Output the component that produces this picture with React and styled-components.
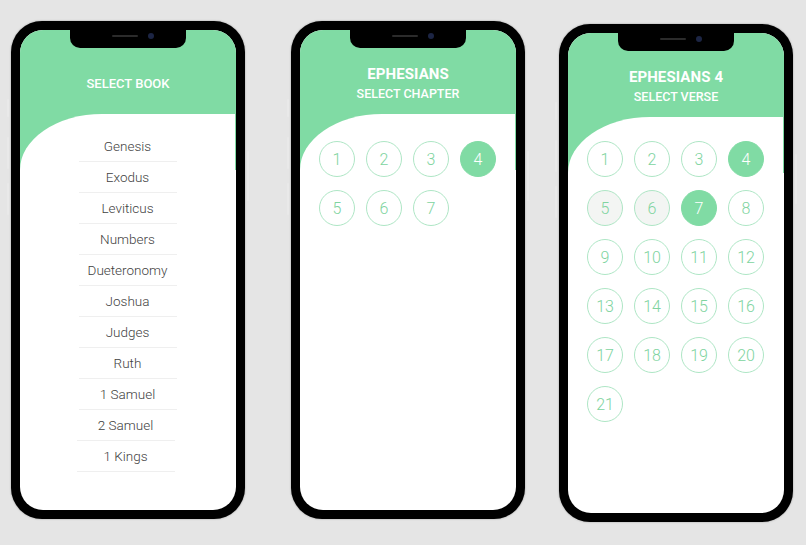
import React from "react";
import styled, { createGlobalStyle } from "styled-components";

const GREEN = "#80dba4";

const GlobalStyle = createGlobalStyle`
  html, body {
    margin: 0;
    padding: 0;
    background: #e5e5e5;
    font-family: Roboto, "Liberation Sans", sans-serif;
  }
`;

const Stage = styled.div`
  display: flex;
  align-items: flex-start;
  padding: 21px 0 0 11px;
  height: 545px;
  box-sizing: border-box;
`;

const PhoneFrame = styled.div`
  position: relative;
  flex: none;
  width: 234px;
  height: 498px;
  margin-left: ${(p) => p.$ml || 0}px;
  margin-top: ${(p) => p.$mt || 0}px;
  padding: 9px;
  box-sizing: border-box;
  background: #000;
  border-radius: 31px;
  box-shadow: 0 0 2px rgba(0, 0, 0, 0.35);
`;

const SideButton = styled.span`
  position: absolute;
  width: 2px;
  left: ${(p) => (p.$right ? "auto" : "-4px")};
  right: ${(p) => (p.$right ? "-4px" : "auto")};
  top: ${(p) => p.$top}px;
  height: ${(p) => p.$h}px;
  background: #e9e9e9;
  border-radius: 1px;
`;

const Screen = styled.div`
  position: relative;
  width: 100%;
  height: 100%;
  background: #fff;
  border-radius: 23px;
  overflow: hidden;
`;

const Notch = styled.div`
  position: absolute;
  top: 0;
  left: 50%;
  transform: translateX(-50%);
  width: 116px;
  height: 18px;
  background: #000;
  border-radius: 0 0 10px 10px;
  display: flex;
  align-items: center;
  justify-content: center;
  gap: 10px;
  padding-left: 10px;
  box-sizing: border-box;
  z-index: 2;
`;

const Speaker = styled.span`
  width: 26px;
  height: 2px;
  border-radius: 1px;
  background: #2b2b2b;
  margin-top: -6px;
`;

const Camera = styled.span`
  width: 6px;
  height: 6px;
  border-radius: 50%;
  background: #1c2544;
  margin-top: -6px;
`;

const Header = styled.header`
  height: 140px;
  background: ${GREEN};
  padding-top: ${(p) => p.$pt}px;
  box-sizing: border-box;
  display: flex;
  flex-direction: column;
  align-items: center;
  color: #fff;
`;

const Title = styled.div`
  font-size: 15px;
  font-weight: 700;
  line-height: 20px;
  letter-spacing: 0.1px;
`;

const Subtitle = styled.div`
  font-size: ${(p) => (p.$single ? 13 : 12.5)}px;
  font-weight: 500;
  line-height: 16px;
  margin-top: ${(p) => (p.$single ? 0 : 2)}px;
`;

const Body = styled.section`
  position: relative;
  margin-top: -56px;
  margin-right: 1px;
  background: #fff;
  border-top-left-radius: 82px 56px;
  padding-top: ${(p) => p.$pt}px;
`;

const BookList = styled.ul`
  list-style: none;
  margin: 0;
  padding: 0;
  display: flex;
  flex-direction: column;
  align-items: center;
`;

const BookItem = styled.li`
  width: 98px;
  height: 31px;
  box-sizing: border-box;
  border-bottom: 1px solid #efefef;
  display: flex;
  align-items: center;
  justify-content: center;
  font-size: 13.5px;
  font-weight: 300;
  color: #3f3f3f;
  margin-left: ${(p) => p.$shift || 0}px;
`;

const NumberGrid = styled.div`
  display: grid;
  grid-template-columns: repeat(4, 36px);
  column-gap: 11px;
  row-gap: 13px;
  justify-content: center;
`;

const NumberCircle = styled.div`
  width: 36px;
  height: 36px;
  box-sizing: border-box;
  border-radius: 50%;
  border: 1px solid ${(p) => (p.$active ? GREEN : "#aee6c5")};
  background: ${(p) => (p.$active ? GREEN : p.$visited ? "#f3f5f3" : "#fff")};
  color: ${(p) => (p.$active ? "#fff" : "#80d4a0")};
  display: flex;
  align-items: center;
  justify-content: center;
  font-size: 16px;
  font-weight: 300;
`;

const books = [
  "Genesis",
  "Exodus",
  "Leviticus",
  "Numbers",
  "Dueteronomy",
  "Joshua",
  "Judges",
  "Ruth",
  "1 Samuel",
  "2 Samuel",
  "1 Kings",
];

const Phone = ({ ml, mt, children }) => (
  <PhoneFrame $ml={ml} $mt={mt}>
    <SideButton $top={78} $h={18} />
    <SideButton $top={116} $h={32} />
    <SideButton $top={162} $h={32} />
    <SideButton $right $top={130} $h={50} />
    <Screen>
      <Notch>
        <Speaker />
        <Camera />
      </Notch>
      {children}
    </Screen>
  </PhoneFrame>
);

const range = (n) => Array.from({ length: n }, (_, i) => i + 1);

export default function App() {
  return (
    <>
      <GlobalStyle />
      <Stage>
        <Phone>
          <Header $pt={46}>
            <Subtitle $single>SELECT BOOK</Subtitle>
          </Header>
          <Body $pt={17}>
            <BookList>
              {books.map((b, i) => (
                <BookItem key={b} $shift={i >= 9 ? -4 : 0}>
                  {b}
                </BookItem>
              ))}
            </BookList>
          </Body>
        </Phone>

        <Phone ml={46}>
          <Header $pt={34}>
            <Title>EPHESIANS</Title>
            <Subtitle>SELECT CHAPTER</Subtitle>
          </Header>
          <Body $pt={27}>
            <NumberGrid>
              {range(7).map((n) => (
                <NumberCircle key={n} $active={n === 4}>
                  {n}
                </NumberCircle>
              ))}
            </NumberGrid>
          </Body>
        </Phone>

        <Phone ml={34} mt={3}>
          <Header $pt={34}>
            <Title>EPHESIANS 4</Title>
            <Subtitle>SELECT VERSE</Subtitle>
          </Header>
          <Body $pt={24}>
            <NumberGrid>
              {range(21).map((n) => (
                <NumberCircle
                  key={n}
                  $active={n === 4 || n === 7}
                  $visited={n === 5 || n === 6}
                >
                  {n}
                </NumberCircle>
              ))}
            </NumberGrid>
          </Body>
        </Phone>
      </Stage>
    </>
  );
}
